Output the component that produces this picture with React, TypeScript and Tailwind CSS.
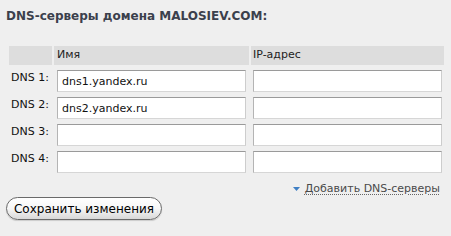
import React from 'react';

const font = { fontFamily: '"DejaVu Sans", Verdana, sans-serif' };

const rows = [
  { label: 'DNS 1:', name: 'dns1.yandex.ru', ip: '' },
  { label: 'DNS 2:', name: 'dns2.yandex.ru', ip: '' },
  { label: 'DNS 3:', name: '', ip: '' },
  { label: 'DNS 4:', name: '', ip: '' },
];

function Field({ value }: { value: string }) {
  return (
    <input
      readOnly
      value={value}
      className="block h-[22px] w-full bg-white border border-t-[#9a9a9a] border-l-[#b4b4b4] border-r-[#cdcdcd] border-b-[#d6d6d6] pl-[4px] text-[11px] text-[#111] outline-none"
      style={font}
    />
  );
}

export default function App() {
  return (
    <div className="w-[451px] h-[236px] bg-[#efefef] pl-[6px] pr-[11px] pt-[9px] text-[#222]" style={font}>
      <h2 className="text-[12px] leading-[14px] font-bold text-[#3b404c]">DNS-серверы домена MALOSIEV.COM:</h2>

      <div className="ml-[3px] mt-[23px] grid grid-cols-[43px_195px_193px] gap-x-[2px] gap-y-[5px] text-[11px]">
        <div className="h-[19px] bg-[#dddddd]" />
        <div className="h-[19px] bg-[#dddddd] pl-[3px] flex items-center text-[#222]">Имя</div>
        <div className="h-[19px] bg-[#dddddd] pl-[2px] flex items-center text-[#222]">IP-адрес</div>

        {rows.map(r => (
          <React.Fragment key={r.label}>
            <div className="pl-[2px] pt-[1px] leading-[13px] text-[#111]">{r.label}</div>
            <div className="px-[3px]">
              <Field value={r.name} />
            </div>
            <div className="px-[2px]">
              <Field value={r.ip} />
            </div>
          </React.Fragment>
        ))}
      </div>

      <div className="mt-[9px] flex justify-end items-center text-[11px] leading-[13px]">
        <svg width="7" height="4" viewBox="0 0 7 4" className="mr-[5px] mt-[1px]">
          <polygon points="0,0 7,0 3.5,4" fill="#3f7fc4" />
        </svg>
        <a href="#" className="text-[#4a4a4a] underline decoration-dotted decoration-[#666] underline-offset-[2px]">
          Добавить DNS-серверы
        </a>
      </div>

      <button
        className="mt-[2px] h-[23px] w-[156px] rounded-full border border-[#6a6a6a] bg-gradient-to-b from-white via-[#f6f6f6] to-[#d8d8d8] text-[12px] text-black shadow-[0_1px_1px_rgba(0,0,0,0.15)]"
        style={font}
      >
        Сохранить изменения
      </button>
    </div>
  );
}
